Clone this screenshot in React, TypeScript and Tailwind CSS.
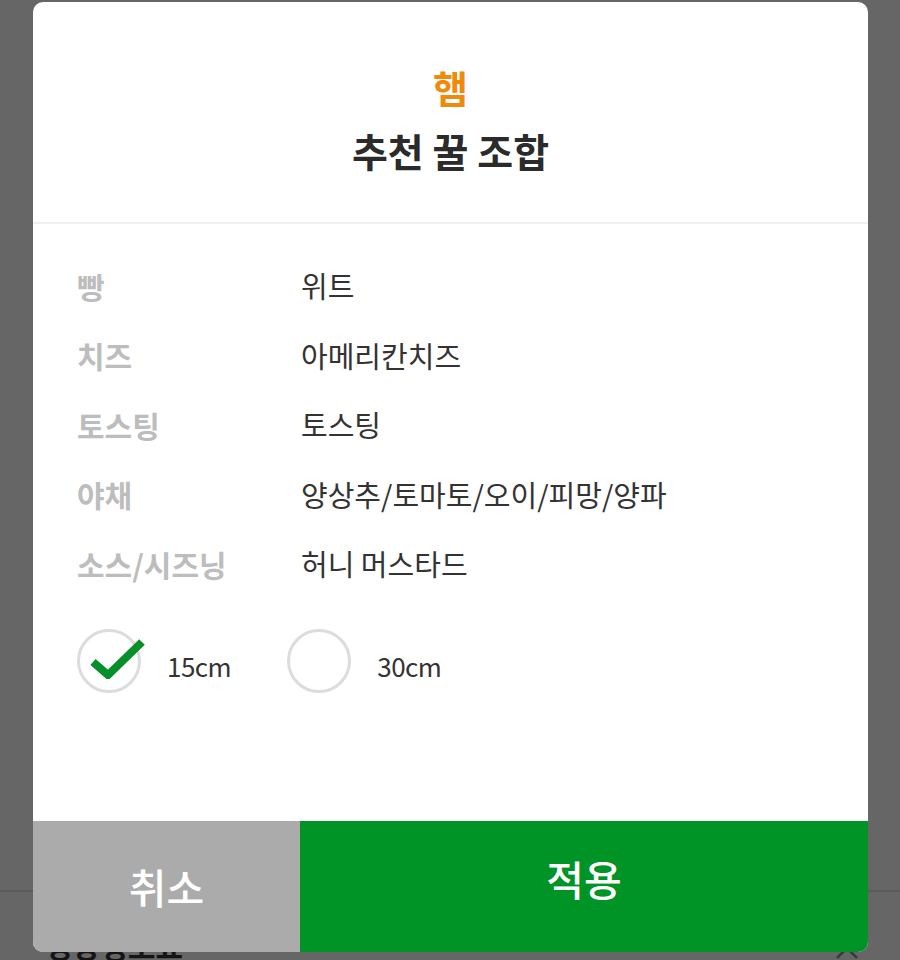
const rows = [
  { label: "빵", value: "위트" },
  { label: "치즈", value: "아메리칸치즈" },
  { label: "토스팅", value: "토스팅" },
  { label: "야채", value: "양상추/토마토/오이/피망/양파" },
  { label: "소스/시즈닝", value: "허니 머스타드" },
];

function SizeOption({ label, checked }: { label: string; checked?: boolean }) {
  return (
    <div className="flex items-center">
      <div className="relative h-[64px] w-[64px] rounded-full border-[3px] border-[#dcdcdc]">
        {checked ? (
          <svg
            className="absolute left-[6px] top-[3px]"
            width="62"
            height="44"
            viewBox="0 0 62 44"
          >
            <path
              d="M7 27 L22 40 L56 7"
              fill="none"
              stroke="#078f2a"
              strokeWidth="8"
              strokeLinecap="butt"
              strokeLinejoin="miter"
            />
          </svg>
        ) : null}
      </div>
      <span className="ml-[26px] mt-[10px] text-[26px] leading-none tracking-[-0.5px] text-[#333]">
        {label}
      </span>
    </div>
  );
}

export default function App() {
  return (
    <div
      className="relative h-[960px] w-[900px] overflow-hidden bg-[#666666]"
      style={{ fontFamily: '"Noto Sans CJK KR", "Noto Sans", sans-serif' }}
    >
      {/* page behind the overlay */}
      <div className="flex h-full flex-col">
        <div className="h-[897px]" />
        <div className="h-[2px] bg-[#5b5b5b]" />
        <div className="flex items-start justify-between px-[45px] pt-[38px]">
          <span className="text-[30px] font-bold leading-none text-[#141414]">
            영양정보표
          </span>
          <svg width="24" height="14" viewBox="0 0 24 14" className="mr-[-4px] mt-[16px]">
            <path d="M2 12 L12 2 L22 12" fill="none" stroke="#3a3a3a" strokeWidth="2.5" />
          </svg>
        </div>
      </div>

      <div className="absolute left-[33px] top-[2px] flex h-[950px] w-[835px] flex-col overflow-hidden rounded-[10px] bg-white">
        <div className="flex h-[220px] flex-col items-center pt-[62px]">
          <div className="text-[38px] font-bold leading-[46px] text-[#f08a0c]">햄</div>
          <div className="mt-[17px] text-[39px] font-bold leading-[46px] text-[#2b2b2b]">
            추천 꿀 조합
          </div>
        </div>
        <div className="h-[2px] bg-[#efefef]" />

        <div className="flex flex-col px-[44px] pt-[27px]">
          {rows.map((row) => (
            <div key={row.label} className="flex h-[69.5px] items-center">
              <span className="w-[224px] text-[30px] font-bold leading-none text-[#bdbdbd]">
                {row.label}
              </span>
              <span className="text-[29px] leading-none text-[#333]">
                {row.value}
              </span>
            </div>
          ))}
          <div className="mt-[30px] flex items-center gap-[56px]">
            <SizeOption label="15cm" checked />
            <SizeOption label="30cm" />
          </div>
        </div>

        <div className="mt-auto flex h-[131px]">
          <button
            type="button"
            className="flex w-[267px] items-center justify-center bg-[#ababab] text-[41px] font-medium text-white"
          >
            취소
          </button>
          <button
            type="button"
            className="flex flex-1 items-center justify-center bg-[#009326] pb-[16px] text-[41px] font-medium text-white"
          >
            적용
          </button>
        </div>
      </div>
    </div>
  );
}
